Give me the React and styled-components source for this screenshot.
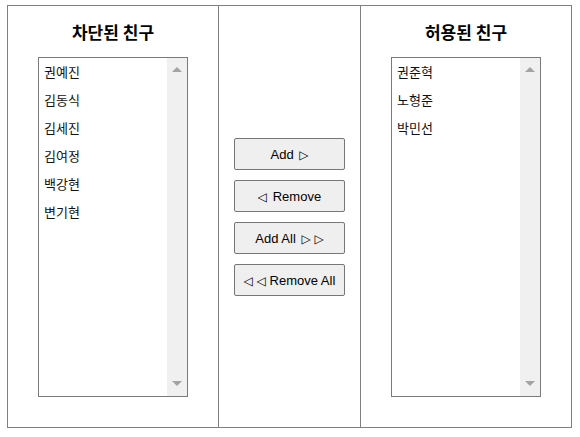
import React from 'react';
import styled, { createGlobalStyle } from 'styled-components';

const GlobalStyle = createGlobalStyle`
    body {
        margin: 0;
        background: #fff;
        font-family: "Liberation Sans", Arial, "Noto Sans CJK KR", sans-serif;
        color: #000;
    }
`;

const Frame = styled.div`
    margin: 5px 0 0 7px;
    width: 565px;
    height: 423px;
    box-sizing: border-box;
    border: 1px solid #808080;
    display: grid;
    grid-template-columns: 210px 141px 210px;
    column-gap: 1px;
    background: #808080;
`;

const Column = styled.div`
    background: #fff;
    display: flex;
    flex-direction: column;
    align-items: center;
    justify-content: ${p => (p.$center ? 'center' : 'flex-start')};
    gap: ${p => (p.$center ? '10px' : '0')};
`;

const Title = styled.h2`
    margin: 16px 0 15px;
    height: 20px;
    line-height: 20px;
    font-size: 17px;
    font-weight: bold;
    font-family: "Noto Sans CJK KR", sans-serif;
`;

const ListBox = styled.div`
    width: 150px;
    height: 340px;
    box-sizing: border-box;
    border: 1px solid #7a7a7a;
    display: flex;
`;

const Items = styled.ul`
    flex: 1;
    margin: 0;
    padding: 0;
    list-style: none;
`;

const Item = styled.li`
    height: 28px;
    line-height: 28px;
    padding-left: 5px;
    font-size: 13px;
    font-family: "Noto Sans CJK KR", sans-serif;
    color: #111;
`;

const Track = styled.div`
    width: 20px;
    background: #f0f0f0;
    display: flex;
    flex-direction: column;
    justify-content: space-between;
    align-items: center;
    padding: 9px 0 10px;
`;

const Arrow = styled.span`
    width: 0;
    height: 0;
    border-left: 5px solid transparent;
    border-right: 5px solid transparent;
    ${p => (p.$down
        ? 'border-top: 5px solid #a3a3a3;'
        : 'border-bottom: 5px solid #a3a3a3;')}
`;

const Button = styled.button`
    width: 111px;
    height: 32px;
    box-sizing: border-box;
    border: 1px solid #767676;
    border-radius: 2px;
    background: #efefef;
    font-family: "Liberation Sans", Arial, sans-serif;
    font-size: 13px;
    color: #000;
    padding: 2px 0 0;
`;

const Tri = styled.span`
    font-family: "DejaVu Sans", sans-serif;
    font-size: 12px;
    margin: ${p => p.$m || '0'};
`;

const blocked = ['권예진', '김동식', '김세진', '김여정', '백강현', '변기현'];
const allowed = ['권준혁', '노형준', '박민선'];

function FriendList({ title, names }) {
    return (
        <Column>
            <Title>{title}</Title>
            <ListBox>
                <Items>
                    {names.map(n => <Item key={n}>{n}</Item>)}
                </Items>
                <Track>
                    <Arrow />
                    <Arrow $down />
                </Track>
            </ListBox>
        </Column>
    );
}

export default function App() {
    return (
        <>
            <GlobalStyle />
            <Frame>
                <FriendList title="차단된 친구" names={blocked} />
                <Column $center>
                    <Button>Add <Tri $m="0 0 0 2px">▷</Tri></Button>
                    <Button><Tri $m="0 2px 0 0">◁</Tri> Remove</Button>
                    <Button>Add All <Tri $m="0 0 0 2px">▷ ▷</Tri></Button>
                    <Button><Tri>◁ ◁</Tri> Remove All</Button>
                </Column>
                <FriendList title="허용된 친구" names={allowed} />
            </Frame>
        </>
    );
}
